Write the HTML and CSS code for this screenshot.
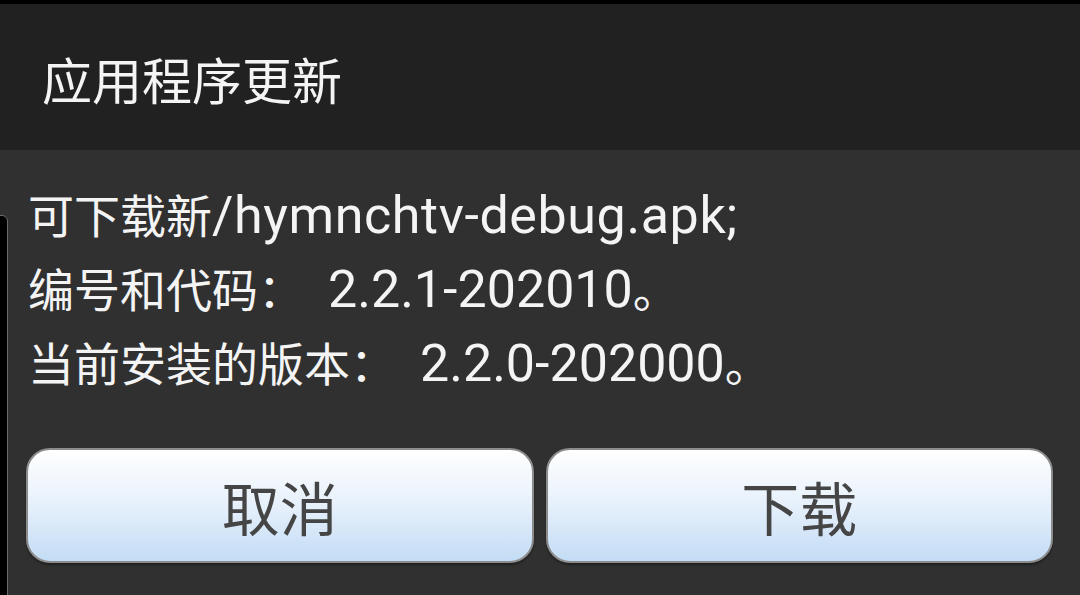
FILE: index.html
```html
<!DOCTYPE html>
<html lang="zh-CN">
<head>
<meta charset="utf-8">
<title>应用程序更新</title>
<link rel="stylesheet" href="styles.css">
</head>
<body>
<div class="screen">
  <div class="behind"></div>
  <div class="dialog">
    <div class="title">应用程序更新</div>
    <div class="content">
      <div class="message">
        <p>可下载新<span class="lat">/hymnchtv-debug.apk;</span></p>
        <p>编号和代码：<span class="lat num">2.2.1-202010</span>。</p>
        <p>当前安装的版本：<span class="lat num">2.2.0-202000</span>。</p>
      </div>
      <div class="buttons">
        <button class="btn">取消</button>
        <button class="btn">下载</button>
      </div>
    </div>
  </div>
</div>
</body>
</html>
```
FILE: styles.css
```css
html, body {
  margin: 0;
  padding: 0;
  background: #000;
}
.screen {
  position: relative;
  width: 1080px;
  height: 595px;
  overflow: hidden;
  padding-top: 4px;
  box-sizing: border-box;
  font-family: "Noto Sans CJK SC", sans-serif;
}
.dialog {
  display: flex;
  flex-direction: column;
  height: 591px;
}
.title {
  height: 146px;
  background: #212121;
  color: #f4f4f4;
  font-size: 50px;
  line-height: 148px;
  padding-left: 42px;
  flex: none;
}
.content {
  flex: 1;
  background: #303030;
  padding: 26px 27px 0 26px;
  display: flex;
  flex-direction: column;
}
.message p {
  margin: 0;
  padding-left: 2px;
  color: #f4f4f4;
  font-size: 46px;
  line-height: 74px;
  height: 74px;
  white-space: nowrap;
}
.lat {
  font-family: Roboto, sans-serif;
  font-size: 52px;
  letter-spacing: 0.6px;
  line-height: 1;
}
.num {
  margin-left: 24px;
  letter-spacing: 0;
}
.buttons {
  display: flex;
  gap: 12px;
  margin-top: 50px;
}
.btn {
  flex: 1;
  height: 115px;
  border: 2px solid #8c8c8c;
  border-radius: 24px;
  background: linear-gradient(to bottom, #ffffff 0%, #e6f0fb 50%, #c3dcf5 100%);
  color: #454545;
  font-family: "Noto Sans CJK SC", sans-serif;
  font-size: 58px;
  padding: 0;
  box-shadow: 0 2px 2px rgba(0,0,0,0.35);
}
.behind {
  position: absolute;
  left: -12px;
  top: 215px;
  width: 18px;
  height: 400px;
  background: #000;
  border: 1px solid #6a6a6a;
  border-radius: 6px;
  z-index: 2;
}
```
